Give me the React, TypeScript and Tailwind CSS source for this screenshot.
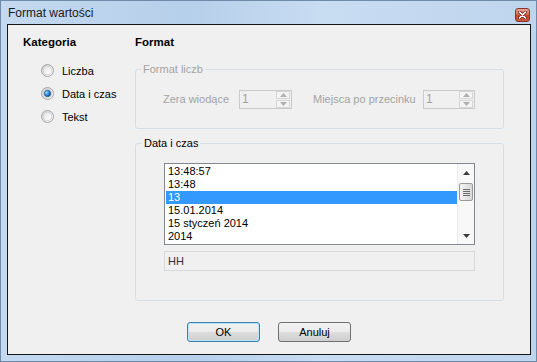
const Radio = ({ checked }: { checked?: boolean }) => (
  <svg width="13" height="13" viewBox="0 0 13 13">
    <defs>
      <linearGradient id="rOuter" x1="0" y1="0" x2="1" y2="1">
        <stop offset="0" stopColor="#cfcfcf" />
        <stop offset="1" stopColor="#fbfbfb" />
      </linearGradient>
      <linearGradient id="rInner" x1="0" y1="0" x2="1" y2="1">
        <stop offset="0" stopColor="#e4e4e4" />
        <stop offset="1" stopColor="#ffffff" />
      </linearGradient>
      <radialGradient id="rDot" cx="0.35" cy="0.35" r="0.7">
        <stop offset="0" stopColor="#9fd6fb" />
        <stop offset="0.6" stopColor="#2d82d0" />
        <stop offset="1" stopColor="#0d4c8c" />
      </radialGradient>
    </defs>
    <circle cx="6.5" cy="6.5" r="6" fill="url(#rOuter)" stroke="#a7a7a7" />
    <circle cx="6.5" cy="6.5" r="4.2" fill="url(#rInner)" stroke="#c4c4c4" strokeWidth="0.6" />
    {checked && <circle cx="6.5" cy="6.5" r="3.2" fill="url(#rDot)" stroke="#1b4f86" strokeWidth="0.6" />}
  </svg>
);

const Arrow = ({ up, color = "#3b3b3b" }: { up?: boolean; color?: string }) => (
  <svg width="7" height="4" viewBox="0 0 7 4">
    {up ? <polygon points="3.5,0 7,4 0,4" fill={color} /> : <polygon points="0,0 7,0 3.5,4" fill={color} />}
  </svg>
);

const Spinner = ({ w }: { w: string }) => (
  <div className={`${w} h-[19px] border border-[#c7cbce] bg-[#f0f0f0] flex items-center justify-between`}>
    <span className="pl-[2px] leading-[13px] text-[12px] text-[#a3a3a3]">1</span>
    <div className="w-[14px] h-[17px] mr-[1px] flex flex-col gap-[1px]">
      <div className="flex-1 border border-[#d6d6d6] bg-[#f4f4f4] flex items-center justify-center">
        <Arrow up color="#b0b0b0" />
      </div>
      <div className="flex-1 border border-[#d6d6d6] bg-[#f4f4f4] flex items-center justify-center">
        <Arrow color="#b0b0b0" />
      </div>
    </div>
  </div>
);

const items = ["13:48:57", "13:48", "13", "15.01.2014", "15 styczeń 2014", "2014"];

export default function App() {
  return (
    <div className="w-[537px] h-[362px] border border-[#6f8ba9] bg-[linear-gradient(90deg,#c4d9f0_0%,#b6cfea_35%,#c8dcf2_60%,#bfd5ed_100%)] flex flex-col font-['Liberation_Sans',Arial,sans-serif] text-[11px] text-black">
      {/* Title bar */}
      <div className="h-[23px] flex items-start justify-between pl-[7px] pr-[6px]">
        <span className="pt-[5px] text-[12px] leading-[14px] text-[#1a1a1a]">Format wartości</span>
        <div className="mt-[7px] w-[15px] h-[14px] rounded-[3px] border border-[#8a3527] bg-[linear-gradient(180deg,#e9a595_0%,#d46a53_45%,#c2452c_55%,#c85a3e_100%)] flex items-center justify-center">
          <svg width="9" height="8" viewBox="0 0 9 8">
            <path d="M1.5 1 L7.5 7 M7.5 1 L1.5 7" stroke="#5b2218" strokeWidth="3" strokeLinecap="round" />
            <path d="M1.5 1 L7.5 7 M7.5 1 L1.5 7" stroke="#ffffff" strokeWidth="1.6" strokeLinecap="round" />
          </svg>
        </div>
      </div>

      {/* Client area */}
      <div className="ml-[6px] mr-[5px] h-[331px] border border-[#151515] bg-[#f0f0f0] flex flex-col">
        <div className="flex">
          {/* Kategoria */}
          <div className="w-[127px] pl-[15px] pt-[10px]">
            <div className="font-bold text-[11.5px] leading-[14px]">Kategoria</div>
            <div className="mt-[10px] ml-[18px] flex flex-col">
              {[
                ["Liczba", false],
                ["Data i czas", true],
                ["Tekst", false],
              ].map(([label, checked]) => (
                <div key={label as string} className="h-[23px] flex items-center gap-[8px]">
                  <Radio checked={checked as boolean} />
                  <span className="leading-[14px]">{label as string}</span>
                </div>
              ))}
            </div>
          </div>

          {/* Format */}
          <div className="w-[369px] pt-[10px]">
            <div className="font-bold text-[11.5px] leading-[14px]">Format</div>

            <fieldset className="mt-[13px] h-[67px] border border-[#d5dfe5] rounded-[3px]">
              <legend className="ml-[5px] px-[2px] leading-[14px] text-[#a3a3a3]">Format liczb</legend>
              <div className="mt-[14px] pl-[27px] flex items-center text-[#a3a3a3]">
                <span className="w-[76px]">Zera wiodące</span>
                <Spinner w="w-[53px]" />
                <span className="ml-[21px] w-[110px]">Miejsca po przecinku</span>
                <Spinner w="w-[52px]" />
              </div>
            </fieldset>

            <fieldset className="mt-[7px] h-[165px] border border-[#d5dfe5] rounded-[3px]">
              <legend className="ml-[6px] px-[2px] leading-[14px]">Data i czas</legend>
              <div className="mt-[13px] ml-[28px] w-[311px] h-[82px] border border-[#828790] bg-white flex">
                <div className="w-[292px] pl-[1px] pt-[1px]">
                  {items.map((it) => (
                    <div
                      key={it}
                      className={`h-[13px] leading-[13px] pl-[2px] whitespace-nowrap ${
                        it === "13" ? "bg-[#3399ff] text-white" : ""
                      }`}
                    >
                      {it}
                    </div>
                  ))}
                </div>
                <div className="w-[17px] h-full bg-[#f8f8f8] border-l border-[#ececec] flex flex-col">
                  <div className="h-[17px] flex items-center justify-center">
                    <Arrow up />
                  </div>
                  <div className="flex-1">
                    <div className="mt-[2px] mx-[1px] h-[18px] rounded-[2px] border border-[#999999] bg-[linear-gradient(90deg,#f4f4f4_0%,#e6e6e6_50%,#d8d8d8_100%)] flex flex-col items-center justify-center gap-[1px]">
                      <div className="w-[7px] h-[1px] bg-[#6b6b6b]" />
                      <div className="w-[7px] h-[1px] bg-[#6b6b6b]" />
                      <div className="w-[7px] h-[1px] bg-[#6b6b6b]" />
                      <div className="w-[7px] h-[1px] bg-[#6b6b6b]" />
                    </div>
                  </div>
                  <div className="h-[17px] flex items-center justify-center">
                    <Arrow />
                  </div>
                </div>
              </div>
              <div className="mt-[6px] ml-[28px] w-[311px] h-[20px] border border-[#d9d9d9] bg-[#f0f0f0] flex items-center pl-[3px] text-[#333333] leading-[13px]">
                HH
              </div>
            </fieldset>
          </div>
        </div>

        {/* Buttons */}
        <div className="mt-[21px] flex justify-center gap-[18px]">
          <button className="w-[73px] h-[20px] rounded-[3px] border border-[#3c7fb1] shadow-[inset_0_0_0_1px_#b6e3fb] bg-[linear-gradient(180deg,#f2f2f2_0%,#ebebeb_50%,#dddddd_51%,#cfcfcf_100%)] leading-[13px]">
            OK
          </button>
          <button className="w-[73px] h-[20px] rounded-[3px] border border-[#707070] bg-[linear-gradient(180deg,#f2f2f2_0%,#ebebeb_50%,#dddddd_51%,#cfcfcf_100%)] leading-[13px]">
            Anuluj
          </button>
        </div>
      </div>
    </div>
  );
}
